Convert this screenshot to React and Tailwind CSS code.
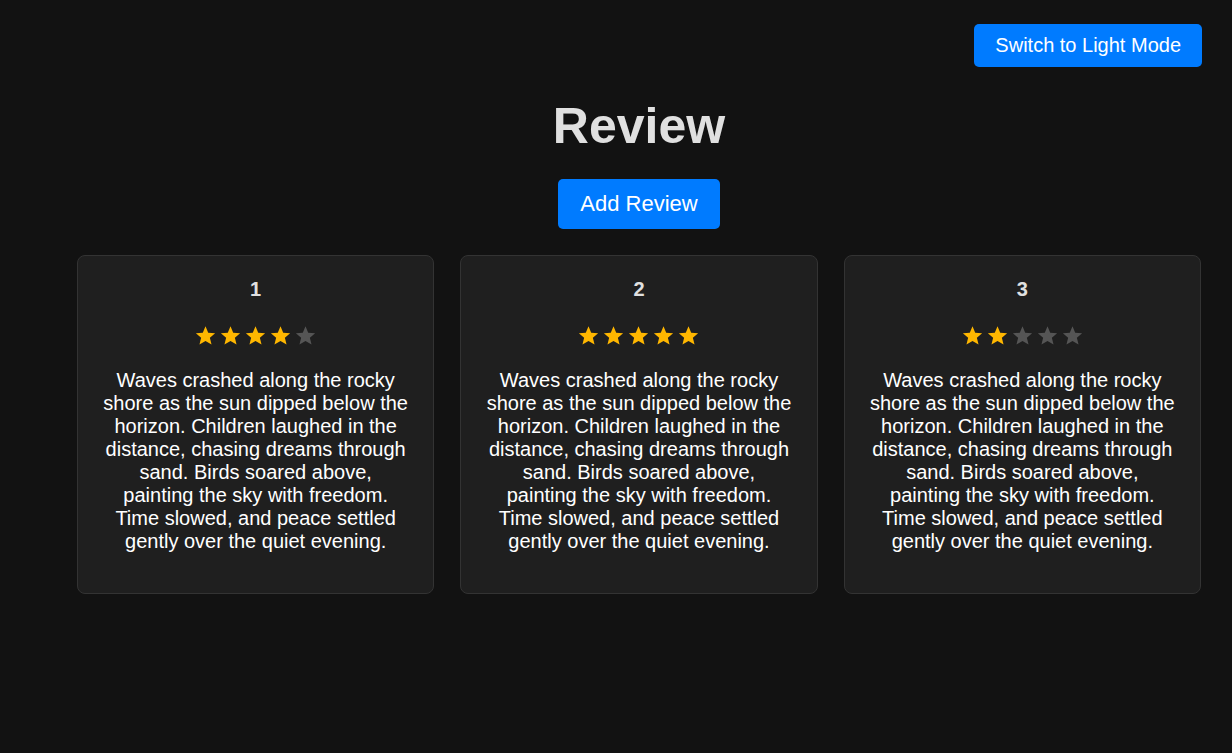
const text =
  "Waves crashed along the rocky shore as the sun dipped below the horizon. Children laughed in the distance, chasing dreams through sand. Birds soared above, painting the sky with freedom. Time slowed, and peace settled gently over the quiet evening.";

const reviews = [
  { id: 1, rating: 4 },
  { id: 2, rating: 5 },
  { id: 3, rating: 2 },
];

function Stars({ rating }) {
  return (
    <div className="flex justify-center gap-[4px] h-[28px] items-center">
      {[1, 2, 3, 4, 5].map((n) => (
        <svg key={n} width="21" height="21" viewBox="0 0 24 24">
          <path
            d="M12 1.5l3.1 7.3 7.9.6-6 5.2 1.9 7.7L12 18.2l-6.9 4.1 1.9-7.7-6-5.2 7.9-.6z"
            fill={n <= rating ? "#ffb700" : "#555555"}
          />
        </svg>
      ))}
    </div>
  );
}

export default function App() {
  return (
    <div
      className="min-h-screen bg-[#121212] text-white"
      style={{ fontFamily: '"Liberation Sans", Arial, sans-serif' }}
    >
      <div className="flex justify-end pt-[24px] pr-[30px]">
        <button className="bg-[#007bff] text-white text-[20px] leading-[23px] py-[10px] px-[21px] rounded-[5px]">
          Switch to Light Mode
        </button>
      </div>
      <div className="pl-[77px] pr-[31px] flex flex-col items-center">
        <h1 className="mt-[31px] text-[50px] leading-[57px] font-bold text-[#e0e0e0]">Review</h1>
        <button className="mt-[24px] bg-[#007bff] text-white text-[22px] leading-[26px] py-[12px] px-[22px] rounded-[5px]">
          Add Review
        </button>
        <div className="mt-[26px] w-full grid grid-cols-3 gap-[26px]">
          {reviews.map((r) => (
            <div
              key={r.id}
              className="bg-[#1f1f1f] border border-[#333333] rounded-[8px] px-[24px] pt-[20px] pb-[40px] text-center"
            >
              <h3 className="text-[20px] leading-[26px] font-bold text-[#e0e0e0]">{r.id}</h3>
              <div className="mt-[19px]">
                <Stars rating={r.rating} />
              </div>
              <p className="mt-[20px] text-[20px] leading-[23px] text-white">{text}</p>
            </div>
          ))}
        </div>
      </div>
    </div>
  );
}
